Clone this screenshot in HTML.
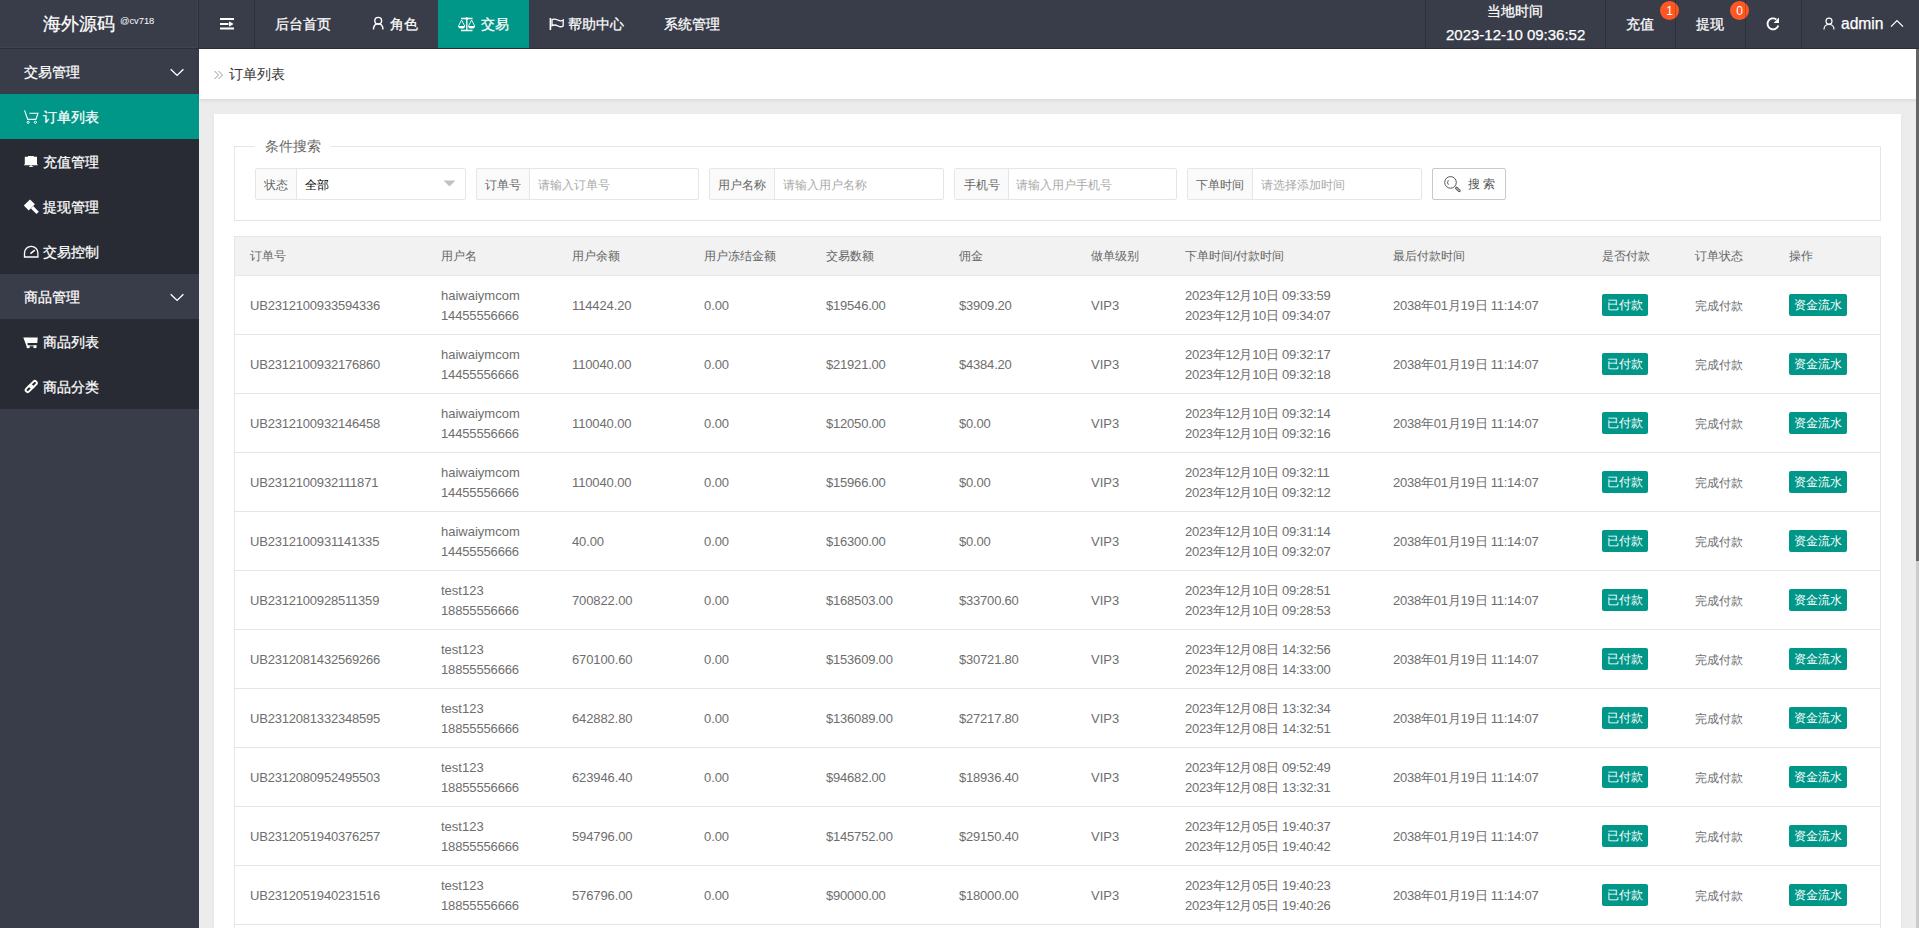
<!DOCTYPE html>
<html><head><meta charset="utf-8">
<style>
*{margin:0;padding:0;box-sizing:border-box}
html,body{width:1919px;height:928px;overflow:hidden;background:#ececec;font-family:"Liberation Sans",sans-serif;color:#666;position:relative}
.a{position:absolute;white-space:nowrap}
.hdr{position:absolute;left:0;top:0;width:1919px;height:49px;border-bottom:1px solid #2c2f38;background:#393d49;color:#fff;font-size:14px}
.sep{position:absolute;top:0;width:1px;height:48px;background:rgba(0,0,0,.2)}
.side{position:absolute;left:0;top:49px;width:199px;height:879px;background:#393d49;color:#fff;font-size:14px}
.it{position:absolute;left:0;width:199px;height:45px;line-height:45px;padding-top:1px;white-space:nowrap}
.bc{position:absolute;left:199px;top:49px;width:1717px;height:50px;background:#fff;box-shadow:0 1px 4px rgba(0,0,0,.10)}
.card{position:absolute;left:214px;top:114px;width:1687px;height:814px;background:#fff;box-shadow:0 1px 2px rgba(0,0,0,.06)}
.fs{position:absolute;left:234px;top:146px;width:1647px;height:75px;border:1px solid #e6e6e6}
.ig{position:absolute;top:168px;height:32px;border:1px solid #e6e6e6;border-radius:2px;background:#fff;font-size:12px}
.lb{position:absolute;left:0;top:0;height:30px;line-height:32px;background:#fafafa;border-right:1px solid #e6e6e6;color:#666;text-align:center}
.ph{position:absolute;top:0;height:30px;line-height:32px;color:#aaa;white-space:nowrap}
.thbg{position:absolute;left:234px;width:1647px;background:#f2f2f2}
.th{position:absolute;height:38px;line-height:38px;font-size:12px;color:#666;white-space:nowrap}
.td{position:absolute;height:20px;line-height:20px;font-size:13px;color:#6e6e6e;white-space:nowrap}
.hl{position:absolute;left:234px;width:1647px;height:1px;background:#e6e6e6}
.vl{position:absolute;width:1px;background:#e6e6e6}
.tag{position:absolute;background:#009688;color:#fff;height:22px;line-height:22px;width:46px;text-align:center;border-radius:2px;font-size:12px;white-space:nowrap}
.sb{position:absolute;left:1916px;top:49px;width:3px;height:879px;background:#cbcbcb}
.sbt{position:absolute;left:1916px;top:49px;width:3px;height:512px;background:#656565}
.bdg{position:absolute;top:1px;width:19px;height:19px;border-radius:50%;background:#ff5722;color:#fff;font-size:12px;line-height:20px;text-align:center}
.hdr .a,.side .it{-webkit-text-stroke:0.25px #fff}

</style></head><body>
<div class="hdr">
  <div class="a" style="left:43px;top:12px;font-size:18px;line-height:24px">海外源码</div>
  <div class="a" style="left:120px;top:14.5px;font-size:9.3px;line-height:12px;-webkit-text-stroke:0">@cv718</div>
  <div class="a" style="left:438px;top:0;width:91px;height:48px;background:#009688"></div>
  <svg class="a" style="left:0;top:0" width="1919" height="48" fill="none" stroke="#fff">
    <rect x="220" y="18" width="14" height="2" fill="#fff" stroke="none"/>
    <rect x="220" y="23" width="8.5" height="2" fill="#fff" stroke="none"/>
    <path d="M229 21.3 L233.6 24 L229 26.7Z" fill="#fff" stroke="none"/>
    <rect x="220" y="27.5" width="14" height="2" fill="#fff" stroke="none"/>
    <circle cx="378.2" cy="20.8" r="3.4" stroke-width="1.4"/>
    <path d="M373.5 29.6 Q373.5 23.8 378.2 23.8 Q382.9 23.8 382.9 29.6" stroke-width="1.4"/>
    <path d="M461 18.5 H472.5 M461 30.5 H472.5 M466.8 18.5 V30.5" stroke-width="1.3"/>
    <circle cx="466.8" cy="18.5" r="1.2" fill="#fff" stroke="none"/>
    <path d="M458.5 26 L461.6 20 L464.7 26 M468.5 26 L471.6 20 L474.7 26" stroke-width="0.9"/>
    <path d="M458 26 H465.2 Q464.8 28.6 461.6 28.6 Q458.4 28.6 458 26Z M468 26 H475.2 Q474.8 28.6 471.6 28.6 Q468.4 28.6 468 26Z" fill="#fff" stroke="none"/>
    <path d="M550.4 18 V30" stroke-width="1.6"/>
    <path d="M552 19.6 C554.5 18.4 556.5 19.3 558.2 20.2 C560 21.1 561.8 21 563.2 20 V26 C561.6 27 559.8 27 558 26 C556.2 25 554.2 24.5 552 25.6Z" stroke-width="1.3"/>
    <path d="M1778.3 25.4 A5.5 5.5 0 1 1 1776.4 19.5" stroke-width="1.9"/>
    <path d="M1773.6 22.9 L1779 22.9 L1779 17.4Z" fill="#fff" stroke="none"/>
    <circle cx="1829" cy="21.2" r="3" stroke-width="1.2"/>
    <path d="M1824 29.5 Q1824 24.5 1829 24.5 Q1834 24.5 1834 29.5" stroke-width="1.2"/>
    <path d="M1891 26.6 L1897 20.6 L1903 26.6" stroke-width="1.3"/>
  </svg>
  <div class="a" style="left:275px;top:0;line-height:48px">后台首页</div>
  <div class="a" style="left:390px;top:0;line-height:48px">角色</div>
  <div class="a" style="left:481px;top:0;line-height:48px">交易</div>
  <div class="a" style="left:568px;top:0;line-height:48px">帮助中心</div>
  <div class="a" style="left:664px;top:0;line-height:48px">系统管理</div>
  <div class="a" style="left:1487px;top:0;line-height:22px">当地时间</div>
  <div class="a" style="left:1446px;top:24px;line-height:22px;font-size:15px">2023-12-10 09:36:52</div>
  <div class="a" style="left:1626px;top:0;line-height:48px">充值</div>
  <div class="a" style="left:1696px;top:0;line-height:48px">提现</div>
  <div class="a" style="left:1841px;top:0;line-height:48px;font-size:15.6px">admin</div>
  <div class="bdg" style="left:1660px">1</div>
  <div class="bdg" style="left:1730px">0</div>
  <div class="sep" style="left:198px"></div>
  <div class="a" style="left:197px;top:0;width:1px;height:47px;background:rgba(255,255,255,.04)"></div>
  <div class="a" style="left:0;top:47px;width:197px;height:1px;background:rgba(255,255,255,.04)"></div>
  <div class="sep" style="left:254px"></div>
  <div class="sep" style="left:1425px"></div>
  <div class="sep" style="left:1605px"></div>
  <div class="sep" style="left:1675px"></div>
  <div class="sep" style="left:1745px"></div>
  <div class="sep" style="left:1801px"></div>
</div>
<div class="side">
  <div class="it" style="top:0;height:44px;padding-top:1px;padding-left:24px">交易管理</div>
  <div class="it" style="top:45px;background:#009688;padding-left:43px">订单列表</div>
  <div class="it" style="top:90px;background:#282b33;padding-left:43px">充值管理</div>
  <div class="it" style="top:135px;background:#282b33;padding-left:43px">提现管理</div>
  <div class="it" style="top:180px;background:#282b33;padding-left:43px">交易控制</div>
  <div class="it" style="top:225px;padding-top:1px;padding-left:24px">商品管理</div>
  <div class="it" style="top:270px;background:#282b33;padding-left:43px">商品列表</div>
  <div class="it" style="top:315px;background:#282b33;padding-left:43px">商品分类</div>
  <svg class="a" style="left:0;top:-49px" width="199" height="420" fill="none" stroke="#fff">
    <path d="M170.7 69.3 L177.1 75.4 L183.4 69.3 M170.7 294.3 L177.1 300.4 L183.4 294.3" stroke-width="1.4"/>
    <path d="M24.6 110.4 L27.7 119.4 H35.9 L38 113.3 H29.4" stroke-width="1.1"/>
    <circle cx="28.2" cy="122.3" r="1.1" stroke-width="1"/><circle cx="35.4" cy="122.3" r="1.1" stroke-width="1"/>
    <path d="M24.8 156.8 H28 V155.9 H33.8 V156.8 H37 V164.5 H37.9 V165.3 H24 V164.5 H24.8Z" fill="#fff" stroke="none"/>
    <path d="M30.4 165 H31.6 V166.2 H33.2 V167 H29 V166.2 H30.4Z" fill="#fff" stroke="none"/>
    <path d="M23.8 205.6 L30 199.6 L34.9 204.3 L28.7 210.4Z" fill="#fff" stroke="none"/>
    <path d="M30.9 208.4 L33.2 206.1 L38.8 211.8 L36.5 214.1Z" fill="#fff" stroke="none"/>
    <path d="M24.5 257 V253 A6.7 6.7 0 0 1 37.9 253 V257Z" stroke-width="1.3"/>
    <path d="M30.4 253.6 L34.8 250.2" stroke-width="1.6"/>
    <path d="M23.3 337.4 H27.4 L27.6 345.5 H36.8 V346.3 H26.6 Z" fill="#fff" stroke="none"/>
    <path d="M26.8 337.6 H37.7 L37.3 343.1 H27.2Z" fill="#fff" stroke="none"/>
    <rect x="26.7" y="345.4" width="2.9" height="2.7" fill="#fff" stroke="none"/><rect x="33.5" y="345.4" width="2.9" height="2.7" fill="#fff" stroke="none"/>
    <rect x="29.4" y="382.4" width="8" height="4" rx="2" transform="rotate(-45 33.4 384.4)" stroke-width="1.9"/>
    <rect x="25.1" y="386.6" width="8" height="4" rx="2" transform="rotate(-45 29.1 388.6)" stroke-width="1.9"/>
  </svg>
</div>
<div class="bc"></div>
<svg class="a" style="left:210px;top:64px" width="20" height="20" fill="none" stroke="#8a8a8a" stroke-width="0.9"><path d="M4.5 7 L8.5 11 L4.5 15 M8.5 7 L12.5 11 L8.5 15"/></svg>
<div class="a" style="left:229px;top:64px;font-size:14px;line-height:20px;color:#333">订单列表</div>
<div class="card"></div>
<div class="sb"></div><div class="sbt"></div>
<div class="fs"></div>
<div class="a" style="left:255px;top:136px;width:76px;height:20px;background:#fff"></div>
<div class="a" style="left:265px;top:136px;font-size:14px;line-height:20px;color:#666">条件搜索</div>
<div class="ig" style="left:255px;width:211px"><div class="lb" style="width:41px">状态</div><div class="ph" style="left:49px;color:#000">全部</div></div>
<svg class="a" style="left:440px;top:176px" width="20" height="16"><path d="M3.5 4.5 H15.5 L9.5 10.5Z" fill="#c2c2c2"/></svg>
<div class="ig" style="left:476px;width:223px"><div class="lb" style="width:53px">订单号</div><div class="ph" style="left:61px">请输入订单号</div></div>
<div class="ig" style="left:709px;width:235px"><div class="lb" style="width:65px">用户名称</div><div class="ph" style="left:73px">请输入用户名称</div></div>
<div class="ig" style="left:954px;width:223px"><div class="lb" style="width:54px">手机号</div><div class="ph" style="left:61px">请输入用户手机号</div></div>
<div class="ig" style="left:1187px;width:235px"><div class="lb" style="width:65px">下单时间</div><div class="ph" style="left:73px">请选择添加时间</div></div>
<div class="a" style="left:1432px;top:168px;width:74px;height:32px;border:1px solid #c9c9c9;border-radius:2px;background:#fff;font-size:12px;line-height:30px;color:#555"><span style="position:absolute;left:35px">搜 索</span></div>
<svg class="a" style="left:1440px;top:174px" width="24" height="20" fill="none" stroke="#555" stroke-width="1"><circle cx="10.5" cy="8.4" r="5.8"/><path d="M8.4 6.3 A3.4 3.4 0 0 0 8.4 10.7"/><path d="M16.4 13.9 L19.3 16.8" stroke-width="2.8" stroke-linecap="round"/><path d="M16.4 13.9 L19.3 16.8" stroke="#fff" stroke-width="0.9" stroke-linecap="round"/></svg>
<div class="tbl">
<div class="thbg" style="top:236px;height:39px"></div>
<div class="th" style="left:250px;top:237px">订单号</div>
<div class="th" style="left:441px;top:237px">用户名</div>
<div class="th" style="left:572px;top:237px">用户余额</div>
<div class="th" style="left:704px;top:237px">用户冻结金额</div>
<div class="th" style="left:826px;top:237px">交易数额</div>
<div class="th" style="left:959px;top:237px">佣金</div>
<div class="th" style="left:1091px;top:237px">做单级别</div>
<div class="th" style="left:1185px;top:237px">下单时间/付款时间</div>
<div class="th" style="left:1393px;top:237px">最后付款时间</div>
<div class="th" style="left:1602px;top:237px">是否付款</div>
<div class="th" style="left:1695px;top:237px">订单状态</div>
<div class="th" style="left:1789px;top:237px">操作</div>
<div class="hl" style="top:275px"></div>
<div class="td" style="left:250px;top:296px;letter-spacing:-0.2px">UB2312100933594336</div>
<div class="td" style="left:441px;top:286px">haiwaiymcom</div>
<div class="td" style="left:441px;top:306px;letter-spacing:-0.15px">14455556666</div>
<div class="td" style="left:572px;top:296px;letter-spacing:-0.12px">114424.20</div>
<div class="td" style="left:704px;top:296px;letter-spacing:-0.1px">0.00</div>
<div class="td" style="left:826px;top:296px;letter-spacing:-0.2px">$19546.00</div>
<div class="td" style="left:959px;top:296px;letter-spacing:-0.2px">$3909.20</div>
<div class="td" style="left:1091px;top:296px">VIP3</div>
<div class="td" style="left:1185px;top:286px;letter-spacing:-0.28px">2023年12月10日 09:33:59</div>
<div class="td" style="left:1185px;top:306px;letter-spacing:-0.28px">2023年12月10日 09:34:07</div>
<div class="td" style="left:1393px;top:296px;letter-spacing:-0.23px">2038年01月19日 11:14:07</div>
<div class="tag" style="left:1602px;top:294px">已付款</div>
<div class="td" style="left:1695px;top:296px;font-size:12px">完成付款</div>
<div class="tag" style="left:1789px;top:294px;width:58px">资金流水</div>
<div class="hl" style="top:334px"></div>
<div class="td" style="left:250px;top:355px;letter-spacing:-0.2px">UB2312100932176860</div>
<div class="td" style="left:441px;top:345px">haiwaiymcom</div>
<div class="td" style="left:441px;top:365px;letter-spacing:-0.15px">14455556666</div>
<div class="td" style="left:572px;top:355px;letter-spacing:-0.12px">110040.00</div>
<div class="td" style="left:704px;top:355px;letter-spacing:-0.1px">0.00</div>
<div class="td" style="left:826px;top:355px;letter-spacing:-0.2px">$21921.00</div>
<div class="td" style="left:959px;top:355px;letter-spacing:-0.2px">$4384.20</div>
<div class="td" style="left:1091px;top:355px">VIP3</div>
<div class="td" style="left:1185px;top:345px;letter-spacing:-0.28px">2023年12月10日 09:32:17</div>
<div class="td" style="left:1185px;top:365px;letter-spacing:-0.28px">2023年12月10日 09:32:18</div>
<div class="td" style="left:1393px;top:355px;letter-spacing:-0.23px">2038年01月19日 11:14:07</div>
<div class="tag" style="left:1602px;top:353px">已付款</div>
<div class="td" style="left:1695px;top:355px;font-size:12px">完成付款</div>
<div class="tag" style="left:1789px;top:353px;width:58px">资金流水</div>
<div class="hl" style="top:393px"></div>
<div class="td" style="left:250px;top:414px;letter-spacing:-0.2px">UB2312100932146458</div>
<div class="td" style="left:441px;top:404px">haiwaiymcom</div>
<div class="td" style="left:441px;top:424px;letter-spacing:-0.15px">14455556666</div>
<div class="td" style="left:572px;top:414px;letter-spacing:-0.12px">110040.00</div>
<div class="td" style="left:704px;top:414px;letter-spacing:-0.1px">0.00</div>
<div class="td" style="left:826px;top:414px;letter-spacing:-0.2px">$12050.00</div>
<div class="td" style="left:959px;top:414px;letter-spacing:-0.2px">$0.00</div>
<div class="td" style="left:1091px;top:414px">VIP3</div>
<div class="td" style="left:1185px;top:404px;letter-spacing:-0.28px">2023年12月10日 09:32:14</div>
<div class="td" style="left:1185px;top:424px;letter-spacing:-0.28px">2023年12月10日 09:32:16</div>
<div class="td" style="left:1393px;top:414px;letter-spacing:-0.23px">2038年01月19日 11:14:07</div>
<div class="tag" style="left:1602px;top:412px">已付款</div>
<div class="td" style="left:1695px;top:414px;font-size:12px">完成付款</div>
<div class="tag" style="left:1789px;top:412px;width:58px">资金流水</div>
<div class="hl" style="top:452px"></div>
<div class="td" style="left:250px;top:473px;letter-spacing:-0.2px">UB2312100932111871</div>
<div class="td" style="left:441px;top:463px">haiwaiymcom</div>
<div class="td" style="left:441px;top:483px;letter-spacing:-0.15px">14455556666</div>
<div class="td" style="left:572px;top:473px;letter-spacing:-0.12px">110040.00</div>
<div class="td" style="left:704px;top:473px;letter-spacing:-0.1px">0.00</div>
<div class="td" style="left:826px;top:473px;letter-spacing:-0.2px">$15966.00</div>
<div class="td" style="left:959px;top:473px;letter-spacing:-0.2px">$0.00</div>
<div class="td" style="left:1091px;top:473px">VIP3</div>
<div class="td" style="left:1185px;top:463px;letter-spacing:-0.28px">2023年12月10日 09:32:11</div>
<div class="td" style="left:1185px;top:483px;letter-spacing:-0.28px">2023年12月10日 09:32:12</div>
<div class="td" style="left:1393px;top:473px;letter-spacing:-0.23px">2038年01月19日 11:14:07</div>
<div class="tag" style="left:1602px;top:471px">已付款</div>
<div class="td" style="left:1695px;top:473px;font-size:12px">完成付款</div>
<div class="tag" style="left:1789px;top:471px;width:58px">资金流水</div>
<div class="hl" style="top:511px"></div>
<div class="td" style="left:250px;top:532px;letter-spacing:-0.2px">UB2312100931141335</div>
<div class="td" style="left:441px;top:522px">haiwaiymcom</div>
<div class="td" style="left:441px;top:542px;letter-spacing:-0.15px">14455556666</div>
<div class="td" style="left:572px;top:532px;letter-spacing:-0.12px">40.00</div>
<div class="td" style="left:704px;top:532px;letter-spacing:-0.1px">0.00</div>
<div class="td" style="left:826px;top:532px;letter-spacing:-0.2px">$16300.00</div>
<div class="td" style="left:959px;top:532px;letter-spacing:-0.2px">$0.00</div>
<div class="td" style="left:1091px;top:532px">VIP3</div>
<div class="td" style="left:1185px;top:522px;letter-spacing:-0.28px">2023年12月10日 09:31:14</div>
<div class="td" style="left:1185px;top:542px;letter-spacing:-0.28px">2023年12月10日 09:32:07</div>
<div class="td" style="left:1393px;top:532px;letter-spacing:-0.23px">2038年01月19日 11:14:07</div>
<div class="tag" style="left:1602px;top:530px">已付款</div>
<div class="td" style="left:1695px;top:532px;font-size:12px">完成付款</div>
<div class="tag" style="left:1789px;top:530px;width:58px">资金流水</div>
<div class="hl" style="top:570px"></div>
<div class="td" style="left:250px;top:591px;letter-spacing:-0.2px">UB2312100928511359</div>
<div class="td" style="left:441px;top:581px">test123</div>
<div class="td" style="left:441px;top:601px;letter-spacing:-0.15px">18855556666</div>
<div class="td" style="left:572px;top:591px;letter-spacing:-0.12px">700822.00</div>
<div class="td" style="left:704px;top:591px;letter-spacing:-0.1px">0.00</div>
<div class="td" style="left:826px;top:591px;letter-spacing:-0.2px">$168503.00</div>
<div class="td" style="left:959px;top:591px;letter-spacing:-0.2px">$33700.60</div>
<div class="td" style="left:1091px;top:591px">VIP3</div>
<div class="td" style="left:1185px;top:581px;letter-spacing:-0.28px">2023年12月10日 09:28:51</div>
<div class="td" style="left:1185px;top:601px;letter-spacing:-0.28px">2023年12月10日 09:28:53</div>
<div class="td" style="left:1393px;top:591px;letter-spacing:-0.23px">2038年01月19日 11:14:07</div>
<div class="tag" style="left:1602px;top:589px">已付款</div>
<div class="td" style="left:1695px;top:591px;font-size:12px">完成付款</div>
<div class="tag" style="left:1789px;top:589px;width:58px">资金流水</div>
<div class="hl" style="top:629px"></div>
<div class="td" style="left:250px;top:650px;letter-spacing:-0.2px">UB2312081432569266</div>
<div class="td" style="left:441px;top:640px">test123</div>
<div class="td" style="left:441px;top:660px;letter-spacing:-0.15px">18855556666</div>
<div class="td" style="left:572px;top:650px;letter-spacing:-0.12px">670100.60</div>
<div class="td" style="left:704px;top:650px;letter-spacing:-0.1px">0.00</div>
<div class="td" style="left:826px;top:650px;letter-spacing:-0.2px">$153609.00</div>
<div class="td" style="left:959px;top:650px;letter-spacing:-0.2px">$30721.80</div>
<div class="td" style="left:1091px;top:650px">VIP3</div>
<div class="td" style="left:1185px;top:640px;letter-spacing:-0.28px">2023年12月08日 14:32:56</div>
<div class="td" style="left:1185px;top:660px;letter-spacing:-0.28px">2023年12月08日 14:33:00</div>
<div class="td" style="left:1393px;top:650px;letter-spacing:-0.23px">2038年01月19日 11:14:07</div>
<div class="tag" style="left:1602px;top:648px">已付款</div>
<div class="td" style="left:1695px;top:650px;font-size:12px">完成付款</div>
<div class="tag" style="left:1789px;top:648px;width:58px">资金流水</div>
<div class="hl" style="top:688px"></div>
<div class="td" style="left:250px;top:709px;letter-spacing:-0.2px">UB2312081332348595</div>
<div class="td" style="left:441px;top:699px">test123</div>
<div class="td" style="left:441px;top:719px;letter-spacing:-0.15px">18855556666</div>
<div class="td" style="left:572px;top:709px;letter-spacing:-0.12px">642882.80</div>
<div class="td" style="left:704px;top:709px;letter-spacing:-0.1px">0.00</div>
<div class="td" style="left:826px;top:709px;letter-spacing:-0.2px">$136089.00</div>
<div class="td" style="left:959px;top:709px;letter-spacing:-0.2px">$27217.80</div>
<div class="td" style="left:1091px;top:709px">VIP3</div>
<div class="td" style="left:1185px;top:699px;letter-spacing:-0.28px">2023年12月08日 13:32:34</div>
<div class="td" style="left:1185px;top:719px;letter-spacing:-0.28px">2023年12月08日 14:32:51</div>
<div class="td" style="left:1393px;top:709px;letter-spacing:-0.23px">2038年01月19日 11:14:07</div>
<div class="tag" style="left:1602px;top:707px">已付款</div>
<div class="td" style="left:1695px;top:709px;font-size:12px">完成付款</div>
<div class="tag" style="left:1789px;top:707px;width:58px">资金流水</div>
<div class="hl" style="top:747px"></div>
<div class="td" style="left:250px;top:768px;letter-spacing:-0.2px">UB2312080952495503</div>
<div class="td" style="left:441px;top:758px">test123</div>
<div class="td" style="left:441px;top:778px;letter-spacing:-0.15px">18855556666</div>
<div class="td" style="left:572px;top:768px;letter-spacing:-0.12px">623946.40</div>
<div class="td" style="left:704px;top:768px;letter-spacing:-0.1px">0.00</div>
<div class="td" style="left:826px;top:768px;letter-spacing:-0.2px">$94682.00</div>
<div class="td" style="left:959px;top:768px;letter-spacing:-0.2px">$18936.40</div>
<div class="td" style="left:1091px;top:768px">VIP3</div>
<div class="td" style="left:1185px;top:758px;letter-spacing:-0.28px">2023年12月08日 09:52:49</div>
<div class="td" style="left:1185px;top:778px;letter-spacing:-0.28px">2023年12月08日 13:32:31</div>
<div class="td" style="left:1393px;top:768px;letter-spacing:-0.23px">2038年01月19日 11:14:07</div>
<div class="tag" style="left:1602px;top:766px">已付款</div>
<div class="td" style="left:1695px;top:768px;font-size:12px">完成付款</div>
<div class="tag" style="left:1789px;top:766px;width:58px">资金流水</div>
<div class="hl" style="top:806px"></div>
<div class="td" style="left:250px;top:827px;letter-spacing:-0.2px">UB2312051940376257</div>
<div class="td" style="left:441px;top:817px">test123</div>
<div class="td" style="left:441px;top:837px;letter-spacing:-0.15px">18855556666</div>
<div class="td" style="left:572px;top:827px;letter-spacing:-0.12px">594796.00</div>
<div class="td" style="left:704px;top:827px;letter-spacing:-0.1px">0.00</div>
<div class="td" style="left:826px;top:827px;letter-spacing:-0.2px">$145752.00</div>
<div class="td" style="left:959px;top:827px;letter-spacing:-0.2px">$29150.40</div>
<div class="td" style="left:1091px;top:827px">VIP3</div>
<div class="td" style="left:1185px;top:817px;letter-spacing:-0.28px">2023年12月05日 19:40:37</div>
<div class="td" style="left:1185px;top:837px;letter-spacing:-0.28px">2023年12月05日 19:40:42</div>
<div class="td" style="left:1393px;top:827px;letter-spacing:-0.23px">2038年01月19日 11:14:07</div>
<div class="tag" style="left:1602px;top:825px">已付款</div>
<div class="td" style="left:1695px;top:827px;font-size:12px">完成付款</div>
<div class="tag" style="left:1789px;top:825px;width:58px">资金流水</div>
<div class="hl" style="top:865px"></div>
<div class="td" style="left:250px;top:886px;letter-spacing:-0.2px">UB2312051940231516</div>
<div class="td" style="left:441px;top:876px">test123</div>
<div class="td" style="left:441px;top:896px;letter-spacing:-0.15px">18855556666</div>
<div class="td" style="left:572px;top:886px;letter-spacing:-0.12px">576796.00</div>
<div class="td" style="left:704px;top:886px;letter-spacing:-0.1px">0.00</div>
<div class="td" style="left:826px;top:886px;letter-spacing:-0.2px">$90000.00</div>
<div class="td" style="left:959px;top:886px;letter-spacing:-0.2px">$18000.00</div>
<div class="td" style="left:1091px;top:886px">VIP3</div>
<div class="td" style="left:1185px;top:876px;letter-spacing:-0.28px">2023年12月05日 19:40:23</div>
<div class="td" style="left:1185px;top:896px;letter-spacing:-0.28px">2023年12月05日 19:40:26</div>
<div class="td" style="left:1393px;top:886px;letter-spacing:-0.23px">2038年01月19日 11:14:07</div>
<div class="tag" style="left:1602px;top:884px">已付款</div>
<div class="td" style="left:1695px;top:886px;font-size:12px">完成付款</div>
<div class="tag" style="left:1789px;top:884px;width:58px">资金流水</div>
<div class="hl" style="top:924px"></div>
<div class="vl" style="left:234px;top:236px;height:788px"></div>
<div class="vl" style="left:1880px;top:236px;height:788px"></div>
<div class="hl" style="top:236px"></div>
</div>
</body></html>
